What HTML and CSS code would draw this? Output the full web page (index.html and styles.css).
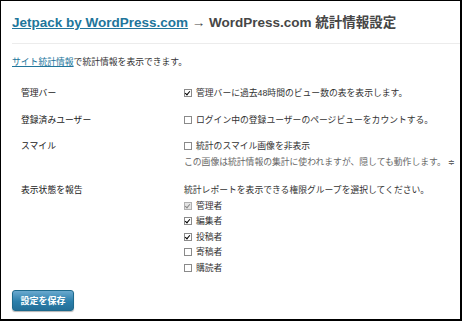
FILE: index.html
```html
<!DOCTYPE html>
<html lang="ja">
<head>
  <meta charset="UTF-8">
  <title>WordPress.com 統計情報設定</title>
  <link rel="stylesheet" href="styles.css">
</head>
<body>
  <div class="wrap">
    <h2 class="title"><a href="#">Jetpack by WordPress.com</a> → WordPress.com 統計情報設定</h2>

    <p class="intro"><a href="#">サイト統計情報</a>で統計情報を表示できます。</p>

    <div class="form">
      <div class="row">
        <div class="label">管理バー</div>
        <div class="field">
          <div class="check"><span class="cb on"></span>管理バーに過去48時間のビュー数の表を表示します。</div>
        </div>
      </div>

      <div class="row">
        <div class="label">登録済みユーザー</div>
        <div class="field">
          <div class="check"><span class="cb"></span>ログイン中の登録ユーザーのページビューをカウントする。</div>
        </div>
      </div>

      <div class="row">
        <div class="label">スマイル</div>
        <div class="field">
          <div class="check"><span class="cb"></span>統計のスマイル画像を非表示</div>
          <div class="desc">この画像は統計情報の集計に使われますが、隠しても動作します。 <span class="mark">≑</span></div>
        </div>
      </div>

      <div class="row">
        <div class="label">表示状態を報告</div>
        <div class="field">
          <div class="lead">統計レポートを表示できる権限グループを選択してください。</div>
          <div class="roles">
            <div class="check"><span class="cb on off"></span>管理者</div>
            <div class="check"><span class="cb on"></span>編集者</div>
            <div class="check"><span class="cb on"></span>投稿者</div>
            <div class="check"><span class="cb"></span>寄稿者</div>
            <div class="check"><span class="cb"></span>購読者</div>
          </div>
        </div>
      </div>
    </div>

    <button class="save">設定を保存</button>
  </div>
</body>
</html>
```

FILE: styles.css
```css
html, body {
  margin: 0;
  padding: 0;
}

body {
  font-family: "Liberation Sans", "Noto Sans CJK JP", sans-serif;
  font-size: 8.8px;
  color: #333;
  background-color: #fff;
}

a {
  color: #21759b;
}

.wrap {
  box-sizing: border-box;
  width: 462px;
  height: 321px;
  border-style: solid;
  border-color: #000;
  border-width: 1px 2px 2px 1px;
  padding-left: 11px;
  overflow: hidden;
}

.title {
  margin: 14px 0 0;
  padding-bottom: 12px;
  border-bottom: 1px solid #ececec;
  font-size: 13.5px;
  line-height: 16px;
  font-weight: bold;
  color: #464646;
}

.intro {
  margin: 11px 0 0;
  line-height: 14px;
  color: #333;
}

.form {
  margin-top: 11px;
}

.row {
  display: grid;
  grid-template-columns: 172px 1fr;
  padding: 6px 0 6.5px;
  line-height: 14px;
}

.label {
  padding-left: 9px;
  color: #222;
}

.check {
  display: flex;
  align-items: center;
  gap: 4px;
  height: 14px;
}

.cb {
  box-sizing: border-box;
  width: 8px;
  height: 8px;
  border: 1px solid #8a8a8a;
  background-color: #fff;
  position: relative;
}

.cb.on::after {
  content: "";
  position: absolute;
  left: 1px;
  top: 0;
  width: 2px;
  height: 4px;
  border-right: 1.5px solid #000;
  border-bottom: 1.5px solid #000;
  transform: rotate(40deg);
}

.cb.off {
  background-color: #e4e4e4;
  border-color: #b0b0b0;
}

.cb.off::after {
  border-color: #888;
}

.desc {
  color: #666;
  margin-top: 2px;
  white-space: nowrap;
}

.mark {
  font-size: 8px;
  color: #666;
}

.lead {
  margin-bottom: 1.5px;
}

.roles .check {
  height: 15.5px;
}

.save {
  margin-top: 7.5px;
  width: 62px;
  height: 21px;
  padding: 0;
  border: 1px solid #1e6a8d;
  border-radius: 3px;
  background: linear-gradient(#6aa9cf, #2b7fab 55%, #236f98);
  color: #fff;
  font-family: "Liberation Sans", "Noto Sans CJK JP", sans-serif;
  font-size: 9px;
  font-weight: bold;
  box-shadow: 0 1px 1px rgba(0,0,0,0.3);
}
```
